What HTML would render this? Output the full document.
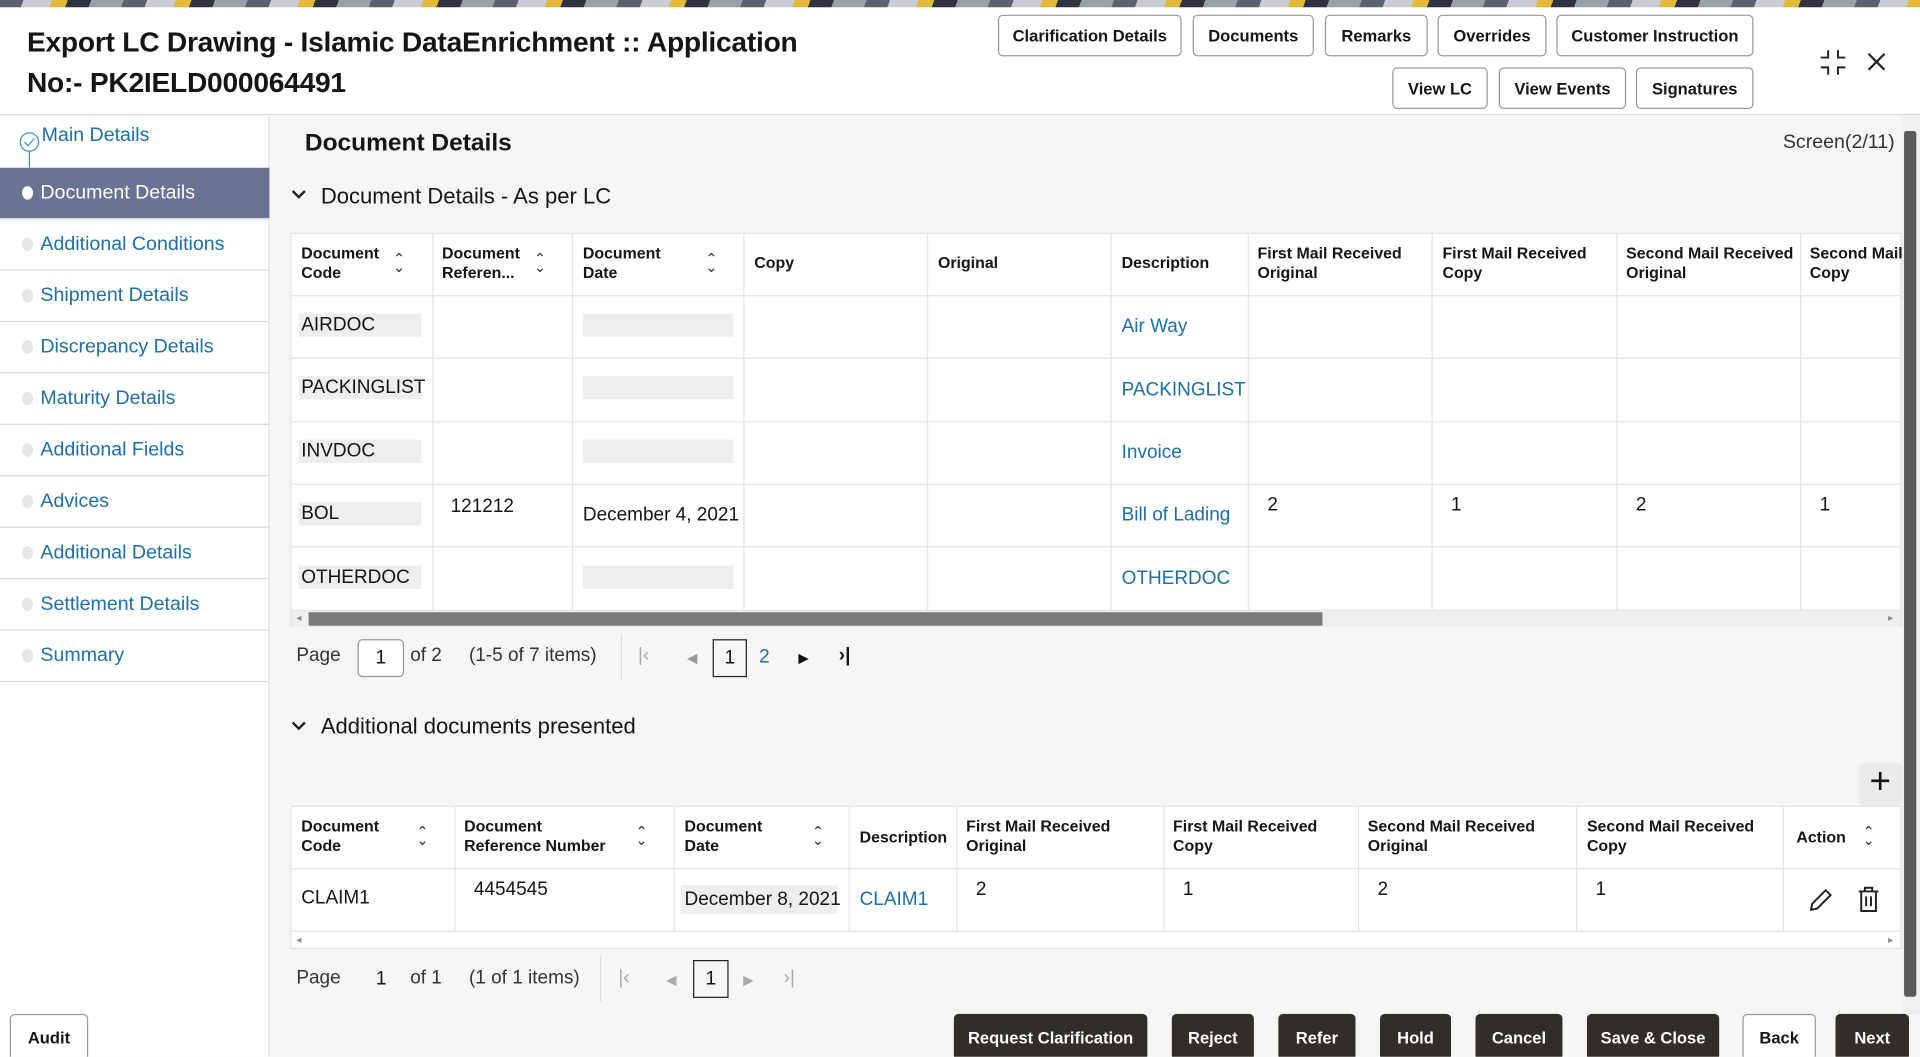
<!DOCTYPE html>
<html><head><meta charset="utf-8"><style>
*{box-sizing:border-box;margin:0;padding:0}
html,body{width:1920px;height:1057px;overflow:hidden;background:#fff;font-family:"Liberation Sans",sans-serif;color:#161513}
#s{position:absolute;left:0;top:0;width:1568px;height:863px;transform:scale(1.22449);transform-origin:0 0;overflow:hidden;background:#f6f6f5}
.a{position:absolute}
.ban{left:0;top:0;width:1568px;height:6px;background:repeating-linear-gradient(110deg,#5b6170 0 18px,#c9ccd2 18px 40px,#e3b93a 40px 52px,#2f3340 52px 70px,#9aa0aa 70px 95px)}
.hdr{left:0;top:6px;width:1568px;height:88px;background:#fff;border-bottom:1px solid #ddd}
.ttl{left:22px;font-size:23px;font-weight:bold;letter-spacing:-.2px}
.b{position:absolute;height:34px;border:1px solid #9a9a9a;border-radius:4px;background:#fff;font-size:13.5px;font-weight:bold;display:flex;align-items:center;justify-content:center;color:#161513}
.side{left:0;top:95px;width:220px;height:768px;background:#fff;border-right:1px solid #e3e3e3}
.it{position:absolute;left:0;width:220px;height:42px;border-bottom:1px solid #d9d9d9;font-size:16px;color:#1f6fa5;padding-left:33px;display:flex;align-items:center}
.it:before{content:"";position:absolute;left:18px;top:15px;width:9px;height:11px;border-radius:50%;background:#e6e6e6}
.sel{background:#6b7394;color:#fff}
.sel:before{background:#fff}
.tbl{background:#fff;border:1px solid #e2e2e2}
.th{position:absolute;font-size:13px;font-weight:bold;line-height:16px}
.td{position:absolute;font-size:15.5px}
.lk{color:#1f6fa5}
.vl{position:absolute;width:1px;background:#e4e4e4}
.hl{position:absolute;height:1px;background:#e4e4e4}
.srt{position:absolute;font-size:12px;line-height:7px;color:#333;text-align:center}
.fb{position:absolute;top:828px;height:38px;background:#312d2a;color:#fff;border-radius:4px;font-size:13.5px;font-weight:bold;display:flex;align-items:center;justify-content:center}
.fw{background:#fff;color:#161513;border:1px solid #9a9a9a}
.gb{position:absolute;background:#eeeeee;height:19px}
</style></head><body><div id="s">
<div class="a ban"></div>
<div class="a hdr"></div>
<div class="a ttl" style="top:21px">Export LC Drawing - Islamic DataEnrichment :: Application</div>
<div class="a ttl" style="top:54px">No:- PK2IELD000064491</div>
<div class="b" style="left:815px;top:12px;width:150px">Clarification Details</div>
<div class="b" style="left:974px;top:12px;width:99px">Documents</div>
<div class="b" style="left:1082px;top:12px;width:84px">Remarks</div>
<div class="b" style="left:1174px;top:12px;width:89px">Overrides</div>
<div class="b" style="left:1271px;top:12px;width:161px">Customer Instruction</div>
<div class="b" style="left:1137px;top:55px;width:78px">View LC</div>
<div class="b" style="left:1224px;top:55px;width:104px">View Events</div>
<div class="b" style="left:1336px;top:55px;width:96px">Signatures</div>
<svg class="a" style="left:1486px;top:40px" width="22" height="22" viewBox="0 0 22 22" fill="none" stroke="#222" stroke-width="1.6"><path d="M7 1v6H1M15 1v6h6M7 21v-6H1M15 21v-6h6"/></svg>
<svg class="a" style="left:1525px;top:43px" width="15" height="15" viewBox="0 0 15 15" stroke="#222" stroke-width="1.8"><path d="M1 1l13 13M14 1L1 14"/></svg>

<div class="a side"></div>
<svg class="a" style="left:15px;top:107px" width="18" height="30" viewBox="0 0 18 30" fill="none" stroke="#3a8fd0" stroke-width="1"><circle cx="9" cy="9" r="7.5"/><path d="M5 9l3 3 5-6M9 17v13"/></svg>
<div class="a" style="left:34px;top:102px;font-size:16px;color:#1f6fa5">Main Details</div>
<div class="it sel" style="top:137px">Document Details</div>
<div class="it" style="top:179px">Additional Conditions</div>
<div class="it" style="top:221px">Shipment Details</div>
<div class="it" style="top:263px">Discrepancy Details</div>
<div class="it" style="top:305px">Maturity Details</div>
<div class="it" style="top:347px">Additional Fields</div>
<div class="it" style="top:389px">Advices</div>
<div class="it" style="top:431px">Additional Details</div>
<div class="it" style="top:473px">Settlement Details</div>
<div class="it" style="top:515px">Summary</div>

<div class="a" style="left:249px;top:106px;font-size:20px;font-weight:bold">Document Details</div>
<div class="a" style="left:1456px;top:108px;font-size:16px;color:#333">Screen(2/11)</div>
<svg class="a" style="left:237px;top:154px" width="14" height="10" viewBox="0 0 14 10" fill="none" stroke="#222" stroke-width="2"><path d="M2 2l5 5 5-5"/></svg>
<div class="a" style="left:262px;top:150px;font-size:18px">Document Details - As per LC</div>

<div class="a tbl" style="left:237px;top:190px;width:1316px;height:322px"></div>
<div class="hl" style="left:237px;top:241px;width:1316px"></div>
<div class="hl" style="left:237px;top:292px;width:1316px"></div>
<div class="hl" style="left:237px;top:344px;width:1316px"></div>
<div class="hl" style="left:237px;top:395px;width:1316px"></div>
<div class="hl" style="left:237px;top:446px;width:1316px"></div>
<div class="hl" style="left:237px;top:498px;width:1316px"></div>
<div class="vl" style="left:353px;top:190px;height:308px"></div>
<div class="vl" style="left:467px;top:190px;height:308px"></div>
<div class="vl" style="left:607px;top:190px;height:308px"></div>
<div class="vl" style="left:757px;top:190px;height:308px"></div>
<div class="vl" style="left:907px;top:190px;height:308px"></div>
<div class="vl" style="left:1019px;top:190px;height:308px"></div>
<div class="vl" style="left:1169px;top:190px;height:308px"></div>
<div class="vl" style="left:1320px;top:190px;height:308px"></div>
<div class="vl" style="left:1470px;top:190px;height:308px"></div>
<div class="th" style="left:246px;top:199px">Document<br>Code</div><div class="srt" style="left:321px;top:208px">⌃<br>⌄</div>
<div class="th" style="left:361px;top:199px">Document<br>Referen...</div><div class="srt" style="left:436px;top:208px">⌃<br>⌄</div>
<div class="th" style="left:476px;top:199px">Document<br>Date</div><div class="srt" style="left:576px;top:208px">⌃<br>⌄</div>
<div class="th" style="left:616px;top:207px">Copy</div>
<div class="th" style="left:766px;top:207px">Original</div>
<div class="th" style="left:916px;top:207px">Description</div>
<div class="th" style="left:1027px;top:199px">First Mail Received<br>Original</div>
<div class="th" style="left:1178px;top:199px">First Mail Received<br>Copy</div>
<div class="th" style="left:1328px;top:199px">Second Mail Received<br>Original</div>
<div class="th" style="left:1478px;top:199px;white-space:nowrap">Second Mail<br>Copy</div>
<div class="gb" style="left:244px;top:256px;width:100px"></div>
<div class="gb" style="left:244px;top:307px;width:100px"></div>
<div class="gb" style="left:244px;top:359px;width:100px"></div>
<div class="gb" style="left:244px;top:410px;width:100px"></div>
<div class="gb" style="left:244px;top:462px;width:100px"></div>
<div class="gb" style="left:476px;top:256px;width:123px"></div>
<div class="gb" style="left:476px;top:307px;width:123px"></div>
<div class="gb" style="left:476px;top:359px;width:123px"></div>
<div class="gb" style="left:476px;top:462px;width:123px"></div>
<div class="td" style="left:246px;top:257px">AIRDOC</div>
<div class="td" style="left:246px;top:308px">PACKINGLIST</div>
<div class="td" style="left:246px;top:360px">INVDOC</div>
<div class="td" style="left:246px;top:411px">BOL</div>
<div class="td" style="left:246px;top:463px">OTHERDOC</div>
<div class="td lk" style="left:916px;top:258px">Air Way</div>
<div class="td lk" style="left:916px;top:310px">PACKINGLIST</div>
<div class="td lk" style="left:916px;top:361px">Invoice</div>
<div class="td lk" style="left:916px;top:412px">Bill of Lading</div>
<div class="td lk" style="left:916px;top:464px">OTHERDOC</div>
<div class="td" style="left:368px;top:405px">121212</div>
<div class="td" style="left:476px;top:412px">December 4, 2021</div>
<div class="td" style="left:1035px;top:404px">2</div>
<div class="td" style="left:1185px;top:404px">1</div>
<div class="td" style="left:1336px;top:404px">2</div>
<div class="td" style="left:1486px;top:404px">1</div>
<div class="a" style="left:238px;top:499px;width:1314px;height:13px;background:#efefef"></div>
<div class="a" style="left:252px;top:500px;width:828px;height:11px;background:#7a7a7a"></div>
<div class="a" style="left:242px;top:500px;font-size:8px;color:#888">◂</div><div class="a" style="left:1542px;top:500px;font-size:8px;color:#888">▸</div>

<div class="td" style="left:242px;top:527px;color:#333">Page</div>
<div class="a" style="left:292px;top:522px;width:38px;height:31px;border:1px solid #999;border-radius:4px;background:#fff;font-size:16px;text-align:center;line-height:30px">1</div>
<div class="td" style="left:335px;top:527px;color:#333">of 2</div>
<div class="td" style="left:383px;top:527px;color:#333">(1-5 of 7 items)</div>
<div class="vl" style="left:507px;top:518px;height:38px;background:#ddd"></div>
<div class="td" style="left:521px;top:527px;color:#aaa">|&lsaquo;</div>
<div class="a" style="left:561px;top:531px;font-size:11px;color:#999">◀</div>
<div class="a" style="left:582px;top:522px;width:28px;height:31px;border:1px solid #222;font-size:16px;text-align:center;line-height:30px">1</div>
<div class="td lk" style="left:620px;top:528px">2</div>
<div class="a" style="left:652px;top:531px;font-size:11px;color:#111">▶</div>
<div class="td" style="left:685px;top:527px;font-weight:bold">&rsaquo;|</div>

<svg class="a" style="left:237px;top:588px" width="14" height="10" viewBox="0 0 14 10" fill="none" stroke="#222" stroke-width="2"><path d="M2 2l5 5 5-5"/></svg>
<div class="a" style="left:262px;top:583px;font-size:18px">Additional documents presented</div>
<div class="a" style="left:1518px;top:623px;width:35px;height:35px;background:#ebebeb;border-radius:4px;font-size:30px;line-height:32px;text-align:center;font-weight:300">+</div>

<div class="a tbl" style="left:237px;top:658px;width:1316px;height:117px"></div>
<div class="hl" style="left:237px;top:709px;width:1316px"></div>
<div class="hl" style="left:237px;top:760px;width:1316px"></div>
<div class="vl" style="left:371px;top:658px;height:102px"></div>
<div class="vl" style="left:550px;top:658px;height:102px"></div>
<div class="vl" style="left:693px;top:658px;height:102px"></div>
<div class="vl" style="left:781px;top:658px;height:102px"></div>
<div class="vl" style="left:950px;top:658px;height:102px"></div>
<div class="vl" style="left:1109px;top:658px;height:102px"></div>
<div class="vl" style="left:1287px;top:658px;height:102px"></div>
<div class="vl" style="left:1456px;top:658px;height:102px"></div>
<div class="th" style="left:246px;top:667px">Document<br>Code</div><div class="srt" style="left:340px;top:676px">⌃<br>⌄</div>
<div class="th" style="left:379px;top:667px">Document<br>Reference Number</div><div class="srt" style="left:519px;top:676px">⌃<br>⌄</div>
<div class="th" style="left:559px;top:667px">Document<br>Date</div><div class="srt" style="left:663px;top:676px">⌃<br>⌄</div>
<div class="th" style="left:702px;top:676px">Description</div>
<div class="th" style="left:789px;top:667px">First Mail Received<br>Original</div>
<div class="th" style="left:958px;top:667px">First Mail Received<br>Copy</div>
<div class="th" style="left:1117px;top:667px">Second Mail Received<br>Original</div>
<div class="th" style="left:1296px;top:667px">Second Mail Received<br>Copy</div>
<div class="th" style="left:1467px;top:676px">Action</div><div class="srt" style="left:1521px;top:676px">⌃<br>⌄</div>
<div class="td" style="left:246px;top:725px">CLAIM1</div>
<div class="td" style="left:387px;top:718px">4454545</div>
<div class="gb" style="left:556px;top:723px;width:128px;height:23px"></div>
<div class="td" style="left:559px;top:726px">December 8, 2021</div>
<div class="td lk" style="left:702px;top:726px">CLAIM1</div>
<div class="td" style="left:797px;top:718px">2</div>
<div class="td" style="left:966px;top:718px">1</div>
<div class="td" style="left:1125px;top:718px">2</div>
<div class="td" style="left:1303px;top:718px">1</div>
<svg class="a" style="left:1476px;top:724px" width="22" height="22" viewBox="0 0 22 22" fill="none" stroke="#222" stroke-width="1.6"><path d="M3 19l1-5L15 3l4 4L8 18z"/></svg>
<svg class="a" style="left:1516px;top:723px" width="20" height="22" viewBox="0 0 20 22" fill="none" stroke="#222" stroke-width="1.6"><path d="M2 5h16M7 5V2h6v3M4 5v16h12V5M8 9v8M12 9v8"/></svg>
<div class="a" style="left:242px;top:763px;font-size:8px;color:#888">◂</div><div class="a" style="left:1542px;top:763px;font-size:8px;color:#888">▸</div>

<div class="td" style="left:242px;top:790px;color:#333">Page</div>
<div class="td" style="left:307px;top:791px">1</div>
<div class="td" style="left:335px;top:790px;color:#333">of 1</div>
<div class="td" style="left:383px;top:790px;color:#333">(1 of 1 items)</div>
<div class="vl" style="left:490px;top:780px;height:38px;background:#ddd"></div>
<div class="td" style="left:505px;top:790px;color:#aaa">|&lsaquo;</div>
<div class="a" style="left:544px;top:794px;font-size:11px;color:#aaa">◀</div>
<div class="a" style="left:566px;top:784px;width:29px;height:31px;border:1px solid #222;font-size:16px;text-align:center;line-height:30px">1</div>
<div class="a" style="left:607px;top:794px;font-size:11px;color:#aaa">▶</div>
<div class="td" style="left:640px;top:790px;color:#aaa">&rsaquo;|</div>

<div class="a" style="left:1553px;top:95px;width:15px;height:733px;background:#f0f0f0"></div>
<div class="a" style="left:1555px;top:107px;width:10px;height:707px;background:#5a5a5a;border-radius:2px"></div>

<div class="fb fw" style="left:8px;width:64px">Audit</div>
<div class="fb" style="left:779px;width:158px">Request Clarification</div>
<div class="fb" style="left:957px;width:67px">Reject</div>
<div class="fb" style="left:1044px;width:63px">Refer</div>
<div class="fb" style="left:1127px;width:58px">Hold</div>
<div class="fb" style="left:1205px;width:71px">Cancel</div>
<div class="fb" style="left:1296px;width:108px">Save &amp; Close</div>
<div class="fb fw" style="left:1423px;width:60px">Back</div>
<div class="fb" style="left:1499px;width:60px">Next</div>
</div></body></html>
